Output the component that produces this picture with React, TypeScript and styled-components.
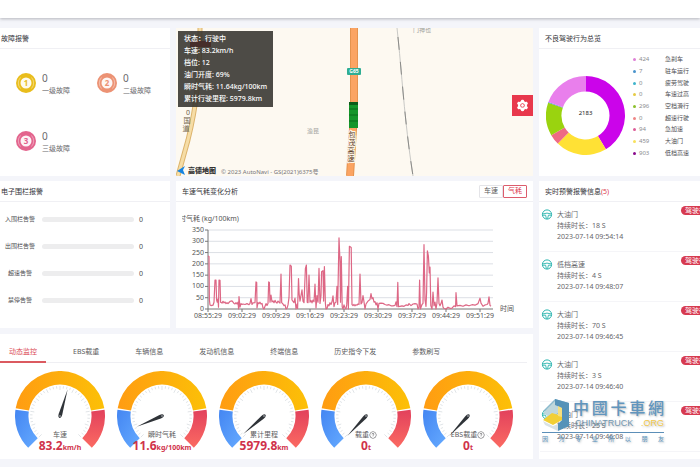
import React, { useState } from "react";
import styled, { createGlobalStyle } from "styled-components";
import { AiFillSetting, AiOutlineQuestionCircle } from "react-icons/ai";

const GlobalStyle = createGlobalStyle`
  *, *::before, *::after { box-sizing: border-box; }
  body {
    margin: 0;
    background: #f4f5fa;
    color: #4c4c50;
    font-family: "Noto Sans", "Noto Sans CJK SC", sans-serif;
    font-size: 7px;
    line-height: 11px;
    overflow-x: hidden;
  }
  button { font: inherit; color: inherit; cursor: pointer; padding: 0; border: 0; background: none; }
  ul { list-style: none; margin: 0; padding: 0; }
  h2, p { margin: 0; }
  svg { display: block; }
  svg text { font-family: "Noto Sans", "Noto Sans CJK SC", sans-serif; }
`;

const TopBar = styled.header`
  height: 18px;
  background: #fff;
  box-shadow: 0 1px 3px rgba(60, 60, 70, 0.35);
`;

const Dashboard = styled.main`
  display: grid;
  grid-template-columns: minmax(0, 170fr) minmax(0, 357fr) minmax(0, 161fr);
  grid-template-areas: "faults map behaviour" "fence trend alerts" "gauges gauges alerts";
  grid-template-rows: minmax(148px, auto) minmax(147px, auto) auto;
  gap: 5px 6px;
  padding: 10px 0 8px;
`;

const Card = styled.section<{ $area: string }>`
  grid-area: ${(p) => p.$area};
  display: flex;
  flex-direction: column;
  background: #fff;
  overflow: hidden;
`;

const CardHead = styled.div<{ $inset?: number }>`
  display: flex;
  align-items: center;
  justify-content: space-between;
  min-height: 21px;
  padding: 0 6px 0 ${(p) => p.$inset ?? 6}px;
  border-bottom: 1px solid #f0f0f4;
`;

const CardTitle = styled.h2`
  font-size: 7px;
  font-weight: 400;
  line-height: 11px;
  color: #333338;
`;

const Count = styled.span`
  color: #dc3b50;
`;

/* Faults */

const FaultGrid = styled.ul`
  display: grid;
  grid-template-columns: repeat(2, minmax(0, 1fr));
  grid-auto-rows: 58px;
  padding: 5px 0 0 16px;
  column-gap: 8px;
`;

const FaultItem = styled.li`
  display: flex;
  align-items: center;
  gap: 6px;
`;

const FaultText = styled.div`
  color: #6a6a6e;
  white-space: nowrap;
`;

const FaultCount = styled.p`
  font-size: 10px;
  line-height: 14px;
`;

const faults = [
  { level: 1, name: "一级故障", color: "#e9bd1c" },
  { level: 2, name: "二级故障", color: "#ec9274" },
  { level: 3, name: "三级故障", color: "#e3648d" },
];

function Medal({ level, color }: { level: number; color: string }) {
  return (
    <svg width="20" height="22" viewBox="0 0 20 22" aria-hidden="true">
      <circle cx="10" cy="11" r="10" fill={color} />
      <path d="M4.5 5.5 A8 8 0 0 0 4.5 16.5 M15.5 5.5 A8 8 0 0 1 15.5 16.5" fill="none" stroke="#fff" strokeOpacity="0.5" strokeWidth="0.8" />
      <circle cx="10" cy="11" r="5.5" fill="#fff" fillOpacity="0.92" />
      <text x="10" y="14" fontSize="8" fontWeight="700" textAnchor="middle" fill={color}>
        {level}
      </text>
    </svg>
  );
}

/* Map */

const MapCard = styled(Card)`
  position: relative;
  background: #fdf9f1;
`;

const MapCanvas = styled.svg`
  width: 100%;
  height: 148px;
`;

const VehicleTip = styled.div`
  position: absolute;
  top: 3px;
  left: 2px;
  padding: 2px 6px;
  background: rgba(52, 50, 46, 0.88);
  color: #fff;
  font-weight: 500;
  line-height: 12px;
  white-space: nowrap;
`;

const SettingsButton = styled.button`
  position: absolute;
  top: 67px;
  right: 0;
  display: grid;
  place-items: center;
  width: 21px;
  height: 21px;
  background: #e8384c;
  color: #fff;
`;

const vehicle = [
  "状态：行驶中",
  "车速: 83.2km/h",
  "档位: 12",
  "油门开度: 69%",
  "瞬时气耗: 11.64kg/100km",
  "累计行驶里程: 5979.8km",
];

function RoadMap() {
  return (
    <MapCanvas viewBox="0 0 357 148" preserveAspectRatio="xMidYMid slice" role="img" aria-label="车辆位置">
      <path d="M24 0 C24 50 20 80 12 112 L2 148" fill="none" stroke="#dcb36c" strokeWidth="5" />
      <path d="M24 0 C24 50 20 80 12 112 L2 148" fill="none" stroke="#f6dda6" strokeWidth="3" />
      <rect x="14" y="13" width="21" height="6" fill="#c0141c" />
      <g fontSize="7" fill="#6d5f48" textAnchor="middle">
        <text x="12" y="87">0</text>
        <text x="11" y="95">国</text>
        <text x="10" y="103">道</text>
      </g>
      <path d="M178 0 L178 85 L174 148" fill="none" stroke="#e5934e" strokeWidth="8" />
      <path d="M178 0 L178 85 L174 148" fill="none" stroke="#fba463" strokeWidth="6" />
      <rect x="171" y="40" width="14" height="7" rx="1" fill="#2fae93" />
      <text x="178" y="45" fontSize="5" fontWeight="700" fill="#fff" textAnchor="middle">G65</text>
      <rect x="173" y="74" width="9" height="26" fill="#15962a" />
      <path d="M173 81h9M173 87h9M173 93h9" stroke="#0b6d1b" strokeWidth="1" />
      <rect x="173" y="74" width="9" height="3" fill="#0c5c18" />
      <g fontSize="7" fill="#5f4128" stroke="#fdf4e6" strokeWidth="2" paintOrder="stroke" textAnchor="middle">
        <text x="176" y="109">包</text>
        <text x="176" y="117">茂</text>
        <text x="175" y="125">高</text>
        <text x="175" y="133">速</text>
      </g>
      <path d="M221 0 C226 45 228 90 237 148" fill="none" stroke="#c9c9c6" strokeWidth="1" />
      <path d="M221 0 C226 45 228 90 237 148" fill="none" stroke="#8b8b88" strokeWidth="1" strokeDasharray="13 12" strokeDashoffset="-9" />
      <text x="237" y="4" fontSize="6" fill="#a3a3a0">门神也</text>
      <text x="131" y="105" fontSize="6" fill="#a3a3a0">渔昆</text>
      <path d="M1 143 L9 138 L7 142 L9 147 L5 145 Z" fill="#1583e0" />
      <text x="12" y="145" fontSize="7" fontWeight="900" fill="#333">高德地图</text>
      <text x="45" y="146" fontSize="6" fill="#77757a">© 2023 AutoNavi - GS(2021)6375号</text>
    </MapCanvas>
  );
}

/* Driving behaviour */

const BehaviourBody = styled.div`
  display: grid;
  grid-template-columns: 79px minmax(0, 1fr);
  column-gap: 8px;
  flex: 1;
  padding-left: 7px;
`;

const DonutBox = styled.div`
  padding-top: 27px;
`;

const Legend = styled.ul`
  display: flex;
  flex-direction: column;
  padding: 5px 0 17px;
`;

const LegendRow = styled.li`
  display: grid;
  grid-template-columns: 3px 29px 1fr;
  align-items: center;
  flex: 1;
  font-size: 6px;
  line-height: 9px;
  color: #4c4c50;
`;

const Dot = styled.i<{ $color: string }>`
  width: 3px;
  height: 3px;
  border-radius: 50%;
  background: ${(p) => p.$color};
`;

const LegendValue = styled.span`
  padding-left: 3px;
  color: #8c8c90;
`;

const behaviours = [
  { name: "急刹车", value: 424, dot: "#df80d6", slice: "#e97fec" },
  { name: "驻车运行", value: 7, dot: "#4a94cc", slice: "#4a94cc" },
  { name: "疲劳驾驶", value: 0, dot: "#3fb4cc", slice: "#3fb4cc" },
  { name: "车速过高", value: 0, dot: "#e6cb45", slice: "#e6cb45" },
  { name: "空档滑行", value: 296, dot: "#8cc02c", slice: "#9ad30f" },
  { name: "超速行驶", value: 0, dot: "#ef8584", slice: "#ef8584" },
  { name: "急加速", value: 94, dot: "#dd5d98", slice: "#ee6a84" },
  { name: "大油门", value: 459, dot: "#f8e15c", slice: "#ffe135" },
  { name: "低档高速", value: 903, dot: "#8a0a8c", slice: "#cb04ea" },
];

function polar(cx: number, cy: number, r: number, deg: number) {
  const a = (deg * Math.PI) / 180;
  return `${(cx + r * Math.sin(a)).toFixed(2)} ${(cy - r * Math.cos(a)).toFixed(2)}`;
}

function ring(cx: number, cy: number, outer: number, inner: number, from: number, to: number) {
  const large = to - from > 180 ? 1 : 0;
  return `M${polar(cx, cy, outer, from)} A${outer} ${outer} 0 ${large} 1 ${polar(cx, cy, outer, to)} L${polar(cx, cy, inner, to)} A${inner} ${inner} 0 ${large} 0 ${polar(cx, cy, inner, from)} Z`;
}

function Donut() {
  const total = behaviours.reduce((sum, b) => sum + b.value, 0);
  let angle = 0;
  const slices = [...behaviours].reverse().filter((b) => b.value > 0).map((b) => {
    const from = angle;
    angle += (b.value / total) * 360;
    return <path key={b.name} d={ring(39.5, 39.5, 39.5, 24, from, angle)} fill={b.slice} />;
  });
  return (
    <svg width="79" height="79" viewBox="0 0 79 79" role="img" aria-label="不良驾驶行为">
      {slices}
      <text x="39.5" y="39" fontSize="6" textAnchor="middle" fill="#222">{total}</text>
    </svg>
  );
}

/* Fence alarms */

const FenceList = styled.ul`
  padding: 4px 0;
`;

const FenceRow = styled.li`
  display: grid;
  grid-template-columns: 34px minmax(0, 92fr) minmax(0, 31fr);
  align-items: center;
  column-gap: 5px;
  height: 27px;
  padding-left: 3px;
  font-size: 6px;
`;

const FenceLabel = styled.label`
  text-align: center;
  white-space: nowrap;
`;

const FenceCount = styled.span`
  font-size: 7px;
`;

const FenceBar = styled.progress`
  appearance: none;
  width: 100%;
  height: 5px;
  border: 0;
  border-radius: 3px;
  overflow: hidden;
  background: #ededee;
  &::-webkit-progress-bar { background: #ededee; }
  &::-webkit-progress-value { background: #dc3b50; }
`;

const fences = ["入围栏告警", "出围栏告警", "超速告警", "禁停告警"];

/* Trend */

const Toggle = styled.div`
  display: flex;
`;

const ToggleButton = styled.button<{ $on: boolean }>`
  width: 24px;
  height: 13px;
  border: 1px solid ${(p) => (p.$on ? "#dc5c6c" : "#e4e4e8")};
  border-radius: 1px;
  color: ${(p) => (p.$on ? "#dc3b50" : "#5c5c60")};
  line-height: 10px;
`;

const TrendCanvas = styled.svg`
  width: 100%;
  height: auto;
`;

const trend: [number, number][] = [
  [0, 235], [1, 232], [1.4, 40], [2, 18], [3, 15], [4, 16], [5, 17], [6, 30], [7, 128], [8, 128], [8.6, 40], [9.3, 30], [10, 45], [10.5, 8], [11, 128],
  [12, 127], [12.6, 30], [14, 26], [15, 34], [16, 27], [17, 31], [18, 24], [19, 28], [20, 24], [21, 29], [22, 34], [24, 36], [26, 25], [27, 22], [28, 28],
  [29, 22], [30, 30], [30.6, 0], [31, 55], [32, 8], [33, 24], [34, 20], [35, 22], [37, 20], [39, 24], [41, 19], [42, 25], [43, 46], [44, 20], [45, 27],
  [47, 28], [48, 120], [48.7, 118], [49, 5], [50, 28], [51, 24], [52, 30], [53, 22], [54, 25], [55, 5], [56, 0], [57, 12], [58, 24], [59, 16], [60, 25],
  [60.7, 120], [61.4, 118], [62, 30], [63, 62], [64, 32], [65, 36], [66, 28], [67, 38], [68, 30], [69, 26], [70, 35], [71, 30], [72, 26], [73, 155], [73.7, 28],
  [75, 22], [76, 15], [77, 18], [78, 0], [79, 3], [80, 18], [81, 50], [82, 195], [83.3, 190], [84, 40], [85, 34], [86, 28], [87, 48], [88, 0], [89, 22],
  [89.6, 2], [90.5, 135], [91.2, 65], [92, 35], [93, 60], [94, 85], [95, 35], [96, 28], [97.4, 180], [98.4, 195], [99.2, 30], [100, 28], [101, 150], [102, 30],
  [103, 38], [104, 27], [105, 40], [106, 32], [107, 110], [108, 5], [109, 60], [110, 30], [111, 180], [112, 25], [113, 60], [113.6, 165], [115, 170], [115.6, 35],
  [116.4, 188], [117.4, 25], [118, 0], [119, 2], [120, 20], [121, 14], [122, 28], [123, 20], [124, 32], [125, 58], [126, 10], [127, 28], [128, 30], [129, 100],
  [129.7, 20], [131, 315], [132, 210], [132.5, 30], [133.3, 232], [134.2, 10], [135, 0], [136, 18], [137, 5], [138, 0], [138.7, 18], [139.7, 100], [140.4, 0], [141.4, 278],
  [143.2, 272], [144, 20], [145, 15], [146, 20], [147, 14], [148, 19], [149, 17], [150, 22], [151, 20], [152, 155], [153, 22], [154, 28], [155, 60], [156, 32],
  [157, 0], [158, 22], [160, 35], [162, 42], [163, 68], [164, 45], [165, 50], [166, 30], [167, 33], [168, 18], [169, 28], [170, 0], [171, 25], [173, 26],
  [175, 25], [177, 20], [179, 17], [181, 19], [183, 14], [185, 14], [187, 16], [188, 32], [189, 10], [189.8, 118], [190.5, 10], [192, 12], [194, 14], [196, 12],
  [198, 18], [200, 16], [201, 24], [203, 15], [205, 22], [207, 24], [209, 22], [210, 0], [211, 8], [211.6, 128], [212.4, 0], [214, 20], [215, 25], [216, 285],
  [217, 40], [218, 12], [218.6, 75], [219.4, 258], [220.4, 235], [221.3, 160], [222, 185], [222.8, 15], [224, 0], [225, 75], [226, 14], [227, 30], [228, 0],
  [229, 28], [230, 138], [231, 25], [232, 14], [233, 24], [234, 40], [235, 8], [236, 2], [238, 0], [240, 8], [242, 3], [244, 4], [246, 14], [247.6, 10],
  [248, 72], [249, 14], [252, 16], [255, 12], [258, 18], [261, 14], [264, 19], [267, 17], [270, 24], [272, 48], [273, 26], [275, 12], [277, 18], [279, 20],
  [280, 25], [281, 54], [282, 16], [283, 12],
];
const times = ["08:55:29", "09:02:29", "09:09:29", "09:16:29", "09:23:29", "09:30:29", "09:37:29", "09:44:29", "09:51:29"];
const AXIS_X = 32;
const AXIS_Y = 107;
const yOf = (v: number) => AXIS_Y - (v / 350) * 79;

function TrendChart() {
  return (
    <TrendCanvas viewBox="0 0 357 124" role="img" aria-label="气耗变化">
      <defs>
        <clipPath id="axisName"><rect x="6" y="8" width="90" height="14" /></clipPath>
      </defs>
      <g clipPath="url(#axisName)" fontSize="7" fill="#555">
        <text x="3" y="19">时气耗 (kg/100km)</text>
      </g>
      {[0, 50, 100, 150, 200, 250, 300, 350].map((v) => (
        <g key={v}>
          {v > 0 && <path d={`M${AXIS_X} ${yOf(v)} H317`} stroke="#dcdfe5" strokeWidth="1" />}
          <path d={`M${AXIS_X - 3} ${yOf(v)} H${AXIS_X}`} stroke="#777" strokeWidth="1" />
          <text x="28" y={yOf(v) + 2} fontSize="7" fill="#555" textAnchor="end">{v}</text>
        </g>
      ))}
      <path d={`M${AXIS_X} 28 V${AXIS_Y} H317`} fill="none" stroke="#777" strokeWidth="1" />
      {times.map((t, i) => (
        <g key={t}>
          <path d={`M${AXIS_X + i * 34} ${AXIS_Y} v3`} stroke="#777" strokeWidth="1" />
          <text x={AXIS_X + i * 34} y="116" fontSize="7" fill="#555" textAnchor="middle">{t}</text>
        </g>
      ))}
      <polyline
        points={trend.map(([x, v]) => `${AXIS_X + x},${yOf(v).toFixed(1)}`).join(" ")}
        fill="none"
        stroke="#dd6785"
        strokeWidth="1.2"
        strokeLinejoin="round"
      />
      <text x="324" y="109" fontSize="7" fill="#555">时间</text>
    </TrendCanvas>
  );
}

/* Alerts */

const AlertList = styled.ul`
  padding: 0 0 6px 1px;
`;

const AlertItem = styled.li`
  position: relative;
  display: grid;
  grid-template-columns: 12px 1fr;
  column-gap: 4px;
  height: 50px;
  padding: 7px 0 0 1px;
  border-bottom: 1px solid #f5f5f8;
  color: #66666a;
`;

const AlertTag = styled.span`
  position: absolute;
  top: 4px;
  right: -17px;
  padding: 0 4px;
  border-radius: 5px;
  background: #d73a50;
  color: #fff;
  line-height: 9px;
`;

const alerts = [
  { name: "大油门", span: "18 S", at: "2023-07-14 09:54:14" },
  { name: "低档高速", span: "4 S", at: "2023-07-14 09:48:07" },
  { name: "大油门", span: "70 S", at: "2023-07-14 09:46:45" },
  { name: "大油门", span: "3 S", at: "2023-07-14 09:46:40" },
  { name: "大油门", span: "25 S", at: "2023-07-14 09:46:08" },
];

function Wheel() {
  return (
    <svg width="12" height="11" viewBox="0 0 12 11" fill="none" stroke="#27b3ae" aria-hidden="true">
      <circle cx="6" cy="5.5" r="4.6" strokeWidth="1" />
      <path d="M1.6 5 Q6 3.2 10.4 5 M1.8 6.2 H4.6 L5.4 9.8 M10.2 6.2 H7.4 L6.6 9.8" strokeWidth="0.9" />
    </svg>
  );
}

/* Gauges */

const GaugeCard = styled(Card)`
  margin-top: 1px;
`;

const TabBar = styled.div`
  display: flex;
  gap: 18px;
  margin-right: 6px;
  padding-top: 7px;
  border-bottom: 1px solid #efeff3;
`;

const Tab = styled.button<{ $on: boolean }>`
  height: 22px;
  margin-bottom: -1px;
  padding: 0 9px;
  border-bottom: 2px solid ${(p) => (p.$on ? "#db5a60" : "transparent")};
  color: ${(p) => (p.$on ? "#db4a55" : "#5c5c60")};
  white-space: nowrap;
`;

const GaugeRow = styled.div`
  display: grid;
  grid-template-columns: repeat(5, minmax(0, 1fr));
  padding: 8px 14px 4px 9px;
`;

const GaugeCell = styled.figure`
  display: grid;
  justify-items: center;
  margin: 0;
  & > * { grid-area: 1 / 1; }
`;

const Dial = styled.svg`
  width: 90px;
  height: 84px;
`;

const Reading = styled.figcaption`
  align-self: end;
  display: flex;
  flex-direction: column;
  align-items: center;
`;

const ReadingName = styled.span`
  display: flex;
  align-items: center;
  line-height: 8px;
  color: #5c5c60;
`;

const ReadingValue = styled.strong`
  color: #d0324a;
  font-size: 12px;
  line-height: 14px;
  white-space: nowrap;
`;

const Unit = styled.small`
  font-size: 7px;
`;

const gauges = [
  { name: "车速", value: "83.2", unit: "km/h", needle: 16, help: false },
  { name: "瞬时气耗", value: "11.6", unit: "kg/100km", needle: -113, help: false },
  { name: "累计里程", value: "5979.8", unit: "km", needle: -131, help: false },
  { name: "载重", value: "0", unit: "t", needle: -137, help: true },
  { name: "EBS载重", value: "0", unit: "t", needle: -137, help: true },
];
const tabs = ["动态监控", "EBS载重", "车辆信息", "发动机信息", "终端信息", "历史指令下发", "参数刷写"];

function GaugeDial({ needle }: { needle: number }) {
  return (
    <Dial viewBox="0 0 90 84" aria-hidden="true">
      <defs>
        <linearGradient id="cool" x1="0" y1="0" x2="1" y2="1">
          <stop offset="0" stopColor="#4486f2" /><stop offset="1" stopColor="#65aaff" />
        </linearGradient>
        <linearGradient id="warm" x1="0" y1="0" x2="1" y2="0">
          <stop offset="0" stopColor="#ff9c12" /><stop offset="1" stopColor="#fcc007" />
        </linearGradient>
        <linearGradient id="hot" x1="0" y1="0" x2="0" y2="1">
          <stop offset="0" stopColor="#e2415c" /><stop offset="1" stopColor="#fb6a62" />
        </linearGradient>
      </defs>
      <path d={ring(45, 45, 45, 31.5, -135, -82)} fill="url(#cool)" />
      <path d={ring(45, 45, 45, 31.5, -80, 80)} fill="url(#warm)" />
      <path d={ring(45, 45, 45, 31.5, 82, 135)} fill="url(#hot)" />
      {Array.from({ length: 41 }, (_, i) => -135 + i * 6.75).map((a, i) => (
        <path key={a} d={`M${polar(45, 45, 30, a)} L${polar(45, 45, i % 4 === 0 ? 26 : 27.5, a)}`} stroke="#d3d8dd" strokeWidth="0.7" />
      ))}
      <path d="M45 17.5 L46.8 43 Q47 46.5 45 47 Q43 46.5 43.2 43 Z" fill="#2f3338" transform={`rotate(${needle} 45 45)`} />
      <circle cx="45" cy="45" r="0.8" fill="#c5c8cc" />
    </Dial>
  );
}

/* Watermark */

const Watermark = styled.div`
  position: absolute;
  top: 399px;
  right: 36px;
  width: 122px;
  pointer-events: none;
  text-shadow: 1px 1px 2px rgba(90, 100, 110, 0.45);
`;

const MarkTop = styled.div`
  display: flex;
  gap: 3px;
  height: 32px;
`;

const MarkWords = styled.div`
  flex: 1;
`;

const Spread = styled.div<{ $size: number; $line: number }>`
  display: flex;
  justify-content: space-between;
  font-family: "Liberation Serif", "Noto Sans CJK TC", serif;
  font-size: ${(p) => p.$size}px;
  line-height: ${(p) => p.$line}px;
  color: #6195bd;
`;

const MarkName = styled(Spread)`
  font-weight: 500;
`;

const MarkSite = styled.div`
  display: flex;
  justify-content: space-between;
  padding-left: 2px;
  font-family: "Liberation Sans", sans-serif;
  font-size: 9px;
  line-height: 11px;
  color: #7397b0;
`;

const MarkOrg = styled.span`
  color: #f1c84b;
`;

const MarkRule = styled.div`
  margin: 1px 0 2px;
  border-top: 1px solid #5c8fb8;
`;

function SiteMark() {
  return (
    <Watermark>
      <MarkTop>
        <svg width="28" height="34" viewBox="0 0 28 34" aria-hidden="true">
          <path d="M1 12 L13 0 L27 4 L15 16 Z" fill="#7fb3c9" fillOpacity="0.9" />
          <path d="M4 11 L13 2 L16 5 L16 14 L9 19 L1 14 Z" fill="#bfd7dc" />
          <path d="M13 0 L27 4 L27 27 L16 32 L16 25 L20 21 L20 9 L13 6 Z" fill="#5592b8" />
          <path d="M1 21 L10 14 L20 17 L20 21 L11 26 Z" fill="#f2cf35" />
          <path d="M16 7 L20 9 L20 18 L16 17 Z" fill="#f5df7d" />
          <path d="M1 22 L11 27 L16 25 L16 32 L3 26 Z" fill="#d9e2e5" />
        </svg>
        <MarkWords>
          <MarkName $size={16} $line={19}>
            {[..."中國卡車網"].map((c) => <span key={c}>{c}</span>)}
          </MarkName>
          <MarkSite><span>CHINATRUCK</span><MarkOrg>.ORG</MarkOrg></MarkSite>
        </MarkWords>
      </MarkTop>
      <MarkRule />
      <Spread $size={6} $line={8}>
        {[..."因为专业所以朋友"].map((c) => <span key={c}>{c}</span>)}
      </Spread>
    </Watermark>
  );
}

export default function App() {
  const [metric, setMetric] = useState("气耗");
  const [tab, setTab] = useState(tabs[0]);
  return (
    <>
      <GlobalStyle />
      <TopBar />
      <Dashboard>
        <Card $area="faults">
          <CardHead $inset={1}><CardTitle>故障报警</CardTitle></CardHead>
          <FaultGrid>
            {faults.map((f) => (
              <FaultItem key={f.level}>
                <Medal level={f.level} color={f.color} />
                <FaultText><FaultCount>0</FaultCount>{f.name}</FaultText>
              </FaultItem>
            ))}
          </FaultGrid>
        </Card>

        <MapCard $area="map">
          <RoadMap />
          <VehicleTip>{vehicle.map((line) => <p key={line}>{line}</p>)}</VehicleTip>
          <SettingsButton aria-label="设置"><AiFillSetting size={13} /></SettingsButton>
        </MapCard>

        <Card $area="behaviour">
          <CardHead><CardTitle>不良驾驶行为总览</CardTitle></CardHead>
          <BehaviourBody>
            <DonutBox><Donut /></DonutBox>
            <Legend>
              {behaviours.map((b) => (
                <LegendRow key={b.name}>
                  <Dot $color={b.dot} />
                  <LegendValue>{b.value}</LegendValue>
                  <span>{b.name}</span>
                </LegendRow>
              ))}
            </Legend>
          </BehaviourBody>
        </Card>

        <Card $area="fence">
          <CardHead $inset={1}><CardTitle>电子围栏报警</CardTitle></CardHead>
          <FenceList>
            {fences.map((name, i) => (
              <FenceRow key={name}>
                <FenceLabel htmlFor={`fence-${i}`}>{name}</FenceLabel>
                <FenceBar id={`fence-${i}`} value={0} max={100} />
                <FenceCount>0</FenceCount>
              </FenceRow>
            ))}
          </FenceList>
        </Card>

        <Card $area="trend">
          <CardHead>
            <CardTitle>车速气耗变化分析</CardTitle>
            <Toggle>
              {["车速", "气耗"].map((m) => (
                <ToggleButton key={m} $on={m === metric} onClick={() => setMetric(m)}>{m}</ToggleButton>
              ))}
            </Toggle>
          </CardHead>
          <TrendChart />
        </Card>

        <Card $area="alerts">
          <CardHead><CardTitle>实时预警报警信息<Count>(5)</Count></CardTitle></CardHead>
          <AlertList>
            {alerts.map((a) => (
              <AlertItem key={a.at}>
                <Wheel />
                <div>
                  <p>{a.name}</p>
                  <p>持续时长：{a.span}</p>
                  <p>{a.at}</p>
                </div>
                <AlertTag>驾驶行为</AlertTag>
              </AlertItem>
            ))}
          </AlertList>
        </Card>

        <GaugeCard $area="gauges">
          <TabBar role="tablist">
            {tabs.map((t) => (
              <Tab key={t} role="tab" aria-selected={t === tab} $on={t === tab} onClick={() => setTab(t)}>{t}</Tab>
            ))}
          </TabBar>
          <GaugeRow>
            {gauges.map((g) => (
              <GaugeCell key={g.name}>
                <GaugeDial needle={g.needle} />
                <Reading>
                  <ReadingName>{g.name}{g.help && <AiOutlineQuestionCircle size={8} />}</ReadingName>
                  <ReadingValue>{g.value}<Unit>{g.unit}</Unit></ReadingValue>
                </Reading>
              </GaugeCell>
            ))}
          </GaugeRow>
        </GaugeCard>
      </Dashboard>
      <SiteMark />
    </>
  );
}
